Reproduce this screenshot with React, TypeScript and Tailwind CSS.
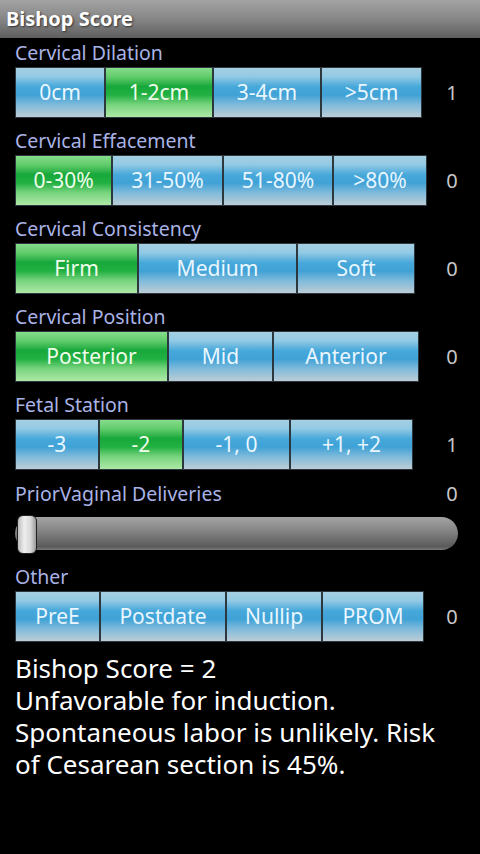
import { useState } from "react";

interface Row {
  label: string;
  options: string[];
  widths: string[];
}

const rows: Row[] = [
  { label: "Cervical Dilation", options: ["0cm", "1-2cm", "3-4cm", ">5cm"], widths: ["w-[90px]", "w-[108px]", "w-[108px]", "w-[101px]"] },
  { label: "Cervical Effacement", options: ["0-30%", "31-50%", "51-80%", ">80%"], widths: ["w-[97px]", "w-[111px]", "w-[110px]", "w-[94px]"] },
  { label: "Cervical Consistency", options: ["Firm", "Medium", "Soft"], widths: ["w-[123px]", "w-[159px]", "w-[118px]"] },
  { label: "Cervical Position", options: ["Posterior", "Mid", "Anterior"], widths: ["w-[153px]", "w-[105px]", "w-[146px]"] },
  { label: "Fetal Station", options: ["-3", "-2", "-1, 0", "+1, +2"], widths: ["w-[84px]", "w-[84px]", "w-[107px]", "w-[123px]"] },
];

const other = { options: ["PreE", "Postdate", "Nullip", "PROM"], widths: ["w-[85px]", "w-[126px]", "w-[96px]", "w-[102px]"] };

const blue =
  "bg-[linear-gradient(to_bottom,#a6cfe2_0%,#92c9e4_18%,#47a8da_38%,#3fa2d6_55%,#7fbadb_75%,#bccdd6_100%)] text-[#eaf6ff]";
const green =
  "bg-[linear-gradient(to_bottom,#86dc8a_0%,#62cc6c_18%,#17a83a_38%,#22b043_55%,#78d47e_75%,#ade9a6_100%)] text-[#f0fcea]";

function SegButton({ text, width, active, onClick }: { text: string; width: string; active: boolean; onClick: () => void }) {
  return (
    <button
      onClick={onClick}
      className={`${width} h-[51px] border border-[#2c383d] flex items-center justify-center text-[21px] ${active ? green : blue}`}
    >
      {text}
    </button>
  );
}

function Label({ text, score }: { text: string; score?: number }) {
  return (
    <div className="flex items-center h-[29px]">
      <span className="flex-1 pl-[15px] text-[19.5px] text-[#a9b3e6]">{text}</span>
      {score !== undefined && <span className="w-[40px] mr-[8px] text-center text-[20px] text-[#c8c8c8]">{score}</span>}
    </div>
  );
}

export default function App() {
  const [sel, setSel] = useState<number[]>([1, 0, 0, 0, 1]);
  const [others, setOthers] = useState<boolean[]>([false, false, false, false]);

  const total = sel.reduce((a, b) => a + b, 0);

  return (
    <div className="w-[480px] h-[854px] bg-black overflow-hidden" style={{ fontFamily: '"Noto Sans", "DejaVu Sans", sans-serif' }}>
      <div className="h-[38px] bg-[linear-gradient(to_bottom,#a3a3a3_0%,#868686_50%,#5e5e5e_100%)] flex items-center pl-[6px]">
        <span className="text-white font-bold text-[20px] [text-shadow:1px_1px_2px_#333]">Bishop Score</span>
      </div>

      {rows.map((row, r) => (
        <div key={row.label} className={r === 0 ? "" : "mt-[8px]"}>
          <Label text={row.label} />
          <div className="flex items-center">
            <div className="flex pl-[15px]">
              {row.options.map((opt, i) => (
                <SegButton
                  key={opt}
                  text={opt}
                  width={row.widths[i]}
                  active={sel[r] === i}
                  onClick={() => setSel(sel.map((v, k) => (k === r ? i : v)))}
                />
              ))}
            </div>
            <span className="ml-auto w-[40px] mr-[8px] text-center text-[20px] text-[#c8c8c8]">{sel[r]}</span>
          </div>
        </div>
      ))}

      <div className="mt-[9px]">
        <Label text="PriorVaginal Deliveries" score={0} />
        <div className="relative ml-[15px] mr-[22px] mt-[9px] h-[33px] rounded-full bg-[linear-gradient(to_bottom,#a4a4a4_0%,#8a8a8a_35%,#6c6c6c_70%,#5a5a5a_90%,#7a7a7a_100%)]">
          <div className="absolute left-[2px] top-[-2px] w-[20px] h-[39px] rounded-[6px] border border-[#222] bg-[linear-gradient(to_right,#bdbdbd_0%,#eeeeee_35%,#d8d8d8_70%,#9a9a9a_100%)]" />
        </div>
      </div>

      <div className="mt-[12px]">
        <Label text="Other" />
        <div className="flex items-center">
          <div className="flex pl-[15px]">
            {other.options.map((opt, i) => (
              <SegButton
                key={opt}
                text={opt}
                width={other.widths[i]}
                active={others[i]}
                onClick={() => setOthers(others.map((v, k) => (k === i ? !v : v)))}
              />
            ))}
          </div>
          <span className="ml-auto w-[40px] mr-[8px] text-center text-[20px] text-[#c8c8c8]">0</span>
        </div>
      </div>

      <div className="mt-[10px] pl-[15px] text-white text-[26px] leading-[32px]">
        <div>Bishop Score = {total}</div>
        <div>Unfavorable for induction.</div>
        <div>Spontaneous labor is unlikely. Risk</div>
        <div>of Cesarean section is 45%.</div>
      </div>
    </div>
  );
}
